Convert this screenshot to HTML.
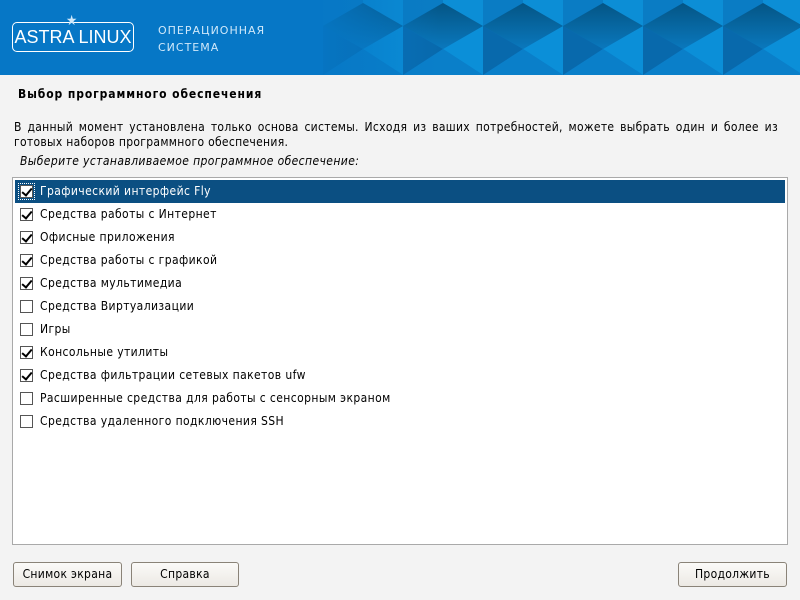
<!DOCTYPE html>
<html><head><meta charset="utf-8"><style>
*{margin:0;padding:0;box-sizing:border-box}
body{width:800px;height:600px;background:#f3f3f3;font-family:"DejaVu Sans Condensed","DejaVu Sans","Liberation Sans",sans-serif;font-size:12px;color:#000;position:relative;overflow:hidden;letter-spacing:0.4px}
.hdr{position:absolute;left:0;top:0;width:800px;height:75px;background:#0677c6;overflow:hidden}
.logo{position:absolute;left:12px;top:22px;width:122px;height:30px;border:1.5px solid #fff;border-radius:5px;color:#fff;font-family:"Liberation Sans",sans-serif;font-size:18px;letter-spacing:0;text-align:center;line-height:28px;white-space:nowrap}
.sub{position:absolute;left:158px;top:22px;color:#cfe8fa;font-size:11px;line-height:17px;letter-spacing:1px;font-family:"DejaVu Sans",sans-serif}
.title{position:absolute;left:18px;top:87px;font-weight:bold;letter-spacing:0.9px}
.p{position:absolute;left:14px;top:120px;width:764px;text-align:justify;line-height:15px;letter-spacing:0.3px}
.p2{position:absolute;left:20px;top:154px;font-style:italic}
.list{position:absolute;left:12px;top:177px;width:776px;height:368px;background:#fff;border:1px solid #a9a9a9}
.row{position:absolute;left:2px;width:770px;height:23px;line-height:23px;padding-left:25px}
.row.sel{background:#0b4f82;color:#fff}
.cb{position:absolute;left:5px;top:5px;width:13px;height:13px;border:1px solid #555;background:#fff}
.cb.c::after{content:"";position:absolute;left:3px;top:0px;width:4px;height:8px;border:solid #000;border-width:0 2px 2px 0;transform:rotate(40deg)}
.sel .cb{outline:1px dotted #fff;outline-offset:1px}
.btn{position:absolute;top:562px;height:25px;border:1px solid #8a8378;border-radius:3px;background:linear-gradient(#fbfaf8,#ece9e4);text-align:center;line-height:23px;letter-spacing:0.3px}
</style></head><body>
<div class="hdr">
<svg width="800" height="75" style="position:absolute;left:0;top:0">
<defs>
<linearGradient id="g" x1="0" y1="0" x2="0" y2="1"><stop offset="0" stop-color="#045585"/><stop offset="1" stop-color="#0a78bd"/></linearGradient>
<linearGradient id="fade" x1="0" y1="0" x2="1" y2="0"><stop offset="0" stop-color="#0677c6"/><stop offset="1" stop-color="#0677c6" stop-opacity="0"/></linearGradient>
<g id="t">
<polygon points="0,26 40,49 0,75" fill="#0869ac"/>
<polygon points="40,49 80,26 80,75" fill="#0b8fd8"/>
<polygon points="40,49 0,75 80,75" fill="#0a7fc9"/>
<polygon points="0,26 40,3 40,-5 0,-5" fill="#0a7cc4"/>
<polygon points="40,3 80,26 80,-5 40,-5" fill="#0c8ed6"/>
<polygon points="0,26 40,3 80,26 40,49" fill="url(#g)"/>
</g>
</defs>
<use href="#t" x="323"/><use href="#t" x="403"/><use href="#t" x="483"/><use href="#t" x="563"/><use href="#t" x="643"/><use href="#t" x="723"/>
<rect x="300" y="0" width="140" height="75" fill="url(#fade)"/>
</svg>
<div class="logo">ASTRA LINUX</div>
<div style="position:absolute;left:66px;top:13px;color:#cfe8fa;font-size:14px;letter-spacing:0">★</div>
<div class="sub">ОПЕРАЦИОННАЯ<br>СИСТЕМА</div>
</div>
<div class="title">Выбор программного обеспечения</div>
<div class="p">В данный момент установлена только основа системы. Исходя из ваших потребностей, можете выбрать один и более из готовых наборов программного обеспечения.</div>
<div class="p2">Выберите устанавливаемое программное обеспечение:</div>
<div class="list">
<div class="row sel" style="top:2px"><span class="cb c"></span>Графический интерфейс Fly</div>
<div class="row" style="top:25px"><span class="cb c"></span>Средства работы с Интернет</div>
<div class="row" style="top:48px"><span class="cb c"></span>Офисные приложения</div>
<div class="row" style="top:71px"><span class="cb c"></span>Средства работы с графикой</div>
<div class="row" style="top:94px"><span class="cb c"></span>Средства мультимедиа</div>
<div class="row" style="top:117px"><span class="cb"></span>Средства Виртуализации</div>
<div class="row" style="top:140px"><span class="cb"></span>Игры</div>
<div class="row" style="top:163px"><span class="cb c"></span>Консольные утилиты</div>
<div class="row" style="top:186px"><span class="cb c"></span>Средства фильтрации сетевых пакетов ufw</div>
<div class="row" style="top:209px"><span class="cb"></span>Расширенные средства для работы с сенсорным экраном</div>
<div class="row" style="top:232px"><span class="cb"></span>Средства удаленного подключения SSH</div>
</div>
<div class="btn" style="left:13px;width:109px">Снимок экрана</div>
<div class="btn" style="left:131px;width:108px">Справка</div>
<div class="btn" style="left:678px;width:109px">Продолжить</div>
</body></html>
